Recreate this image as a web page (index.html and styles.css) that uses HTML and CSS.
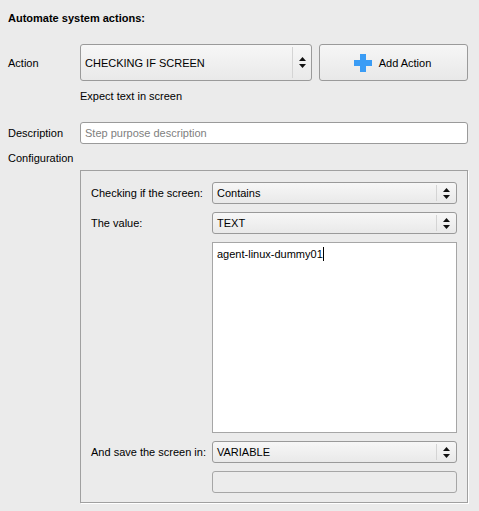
FILE: index.html
```html
<!DOCTYPE html>
<html>
<head>
<meta charset="utf-8">
<link rel="stylesheet" href="styles.css">
</head>
<body>
<div class="page">
  <div class="title">Automate system actions:</div>

  <div class="row action-row">
    <div class="label">Action</div>
    <div class="action-fields">
      <div class="combo big">
        <span class="combo-text">CHECKING IF SCREEN</span>
        <span class="combo-arrow"><svg width="7" height="11" viewBox="0 0 7 11"><path d="M3.5 0 L7 4 L0 4 Z M0 7 L7 7 L3.5 11 Z" fill="#111"/></svg></span>
      </div>
      <div class="button">
        <svg class="plus" width="18" height="18" viewBox="0 0 18 18"><path d="M6 0 H12 V6 H18 V12 H12 V18 H6 V12 H0 V6 H6 Z" fill="#3a9cf5"/></svg>
        <span>Add Action</span>
      </div>
    </div>
  </div>

  <div class="row hint-row">
    <div class="label"></div>
    <div class="hint">Expect text in screen</div>
  </div>

  <div class="row desc-row">
    <div class="label">Description</div>
    <div class="lineedit"><span class="placeholder">Step purpose description</span></div>
  </div>

  <div class="config-label">Configuration</div>

  <div class="row config-row">
    <div class="label"></div>
    <div class="frame">
      <div class="frow">
        <div class="flabel">Checking if the screen:</div>
        <div class="combo small">
          <span class="combo-text">Contains</span>
          <span class="combo-arrow"><svg width="7" height="11" viewBox="0 0 7 11"><path d="M3.5 0 L7 4 L0 4 Z M0 7 L7 7 L3.5 11 Z" fill="#111"/></svg></span>
        </div>
      </div>
      <div class="frow">
        <div class="flabel">The value:</div>
        <div class="combo small">
          <span class="combo-text">TEXT</span>
          <span class="combo-arrow"><svg width="7" height="11" viewBox="0 0 7 11"><path d="M3.5 0 L7 4 L0 4 Z M0 7 L7 7 L3.5 11 Z" fill="#111"/></svg></span>
        </div>
      </div>
      <div class="frow">
        <div class="flabel"></div>
        <div class="textarea"><span>agent-linux-dummy01</span><span class="cursor"></span></div>
      </div>
      <div class="frow">
        <div class="flabel">And save the screen in:</div>
        <div class="combo small">
          <span class="combo-text">VARIABLE</span>
          <span class="combo-arrow"><svg width="7" height="11" viewBox="0 0 7 11"><path d="M3.5 0 L7 4 L0 4 Z M0 7 L7 7 L3.5 11 Z" fill="#111"/></svg></span>
        </div>
      </div>
      <div class="frow">
        <div class="flabel"></div>
        <div class="disabled-edit"></div>
      </div>
    </div>
  </div>
</div>
</body>
</html>
```

FILE: styles.css
```css
html, body {
  margin: 0;
  padding: 0;
  background: #ebebeb;
}
body {
  font-family: "Liberation Sans", Arial, sans-serif;
  font-size: 11px;
  color: #000;
}
.page {
  width: 479px;
  height: 511px;
  box-sizing: border-box;
  padding: 11px 11px 0 8px;
  display: flex;
  flex-direction: column;
}
.title {
  font-weight: bold;
  font-size: 11px;
  height: 14px;
  line-height: 14px;
}
.row {
  display: grid;
  grid-template-columns: 72px 1fr;
  align-items: center;
}
.action-row {
  margin-top: 19px;
  height: 37px;
}
.action-fields {
  display: flex;
  gap: 7px;
  height: 37px;
}
.combo {
  position: relative;
  box-sizing: border-box;
  border: 1px solid #9a9a9a;
  border-radius: 3px;
  background: linear-gradient(#f7f7f7, #e9e9e9);
  display: flex;
  align-items: center;
}
.combo.big {
  width: 232px;
  height: 37px;
}
.combo-text {
  flex: 1;
  padding-left: 4px;
}
.combo-arrow {
  height: 100%;
  box-sizing: border-box;
  border-left: 1px solid #d4d4d4;
  display: flex;
  align-items: center;
  justify-content: center;
}
.combo.big .combo-arrow {
  width: 19px;
  height: 31px;
}
.combo.small .combo-arrow {
  width: 20px;
  height: 16px;
}
.button {
  flex: 1;
  box-sizing: border-box;
  height: 37px;
  border: 1px solid #9a9a9a;
  border-radius: 3px;
  background: linear-gradient(#f6f6f6, #e8e8e8);
  display: flex;
  align-items: center;
  justify-content: center;
  gap: 7px;
  padding-right: 2px;
}
.plus {
  display: block;
}
.hint-row {
  height: 16px;
  margin-top: 7px;
}
.desc-row {
  margin-top: 18px;
  height: 22px;
}
.lineedit {
  box-sizing: border-box;
  height: 22px;
  background: #fff;
  border: 1px solid #9a9a9a;
  border-radius: 3px;
  display: flex;
  align-items: center;
  padding-left: 4px;
}
.placeholder {
  color: #808080;
}
.config-label {
  margin-top: 6px;
  height: 16px;
  line-height: 16px;
}
.config-row {
  margin-top: 4px;
  align-items: start;
}
.frame {
  box-sizing: border-box;
  width: 388px;
  height: 333px;
  border: 1px solid #a0a0a0;
  box-shadow: 1px 1px 0 #fff;
  padding: 11px 10px 0 10px;
  display: flex;
  flex-direction: column;
  gap: 8px;
}
.frow {
  display: grid;
  grid-template-columns: 121px 1fr;
  align-items: center;
}
.combo.small {
  height: 22px;
}
.textarea {
  box-sizing: border-box;
  height: 191px;
  background: #fff;
  border: 1px solid #a6a6a6;
  padding: 4px 0 0 4px;
  align-self: start;
  display: flex;
  align-items: flex-start;
  line-height: 14px;
}
.cursor {
  display: inline-block;
  width: 1px;
  height: 14px;
  background: #000;
}
.disabled-edit {
  box-sizing: border-box;
  height: 22px;
  border: 1px solid #a6a6a6;
  border-radius: 3px;
  background: #ececec;
}
```
